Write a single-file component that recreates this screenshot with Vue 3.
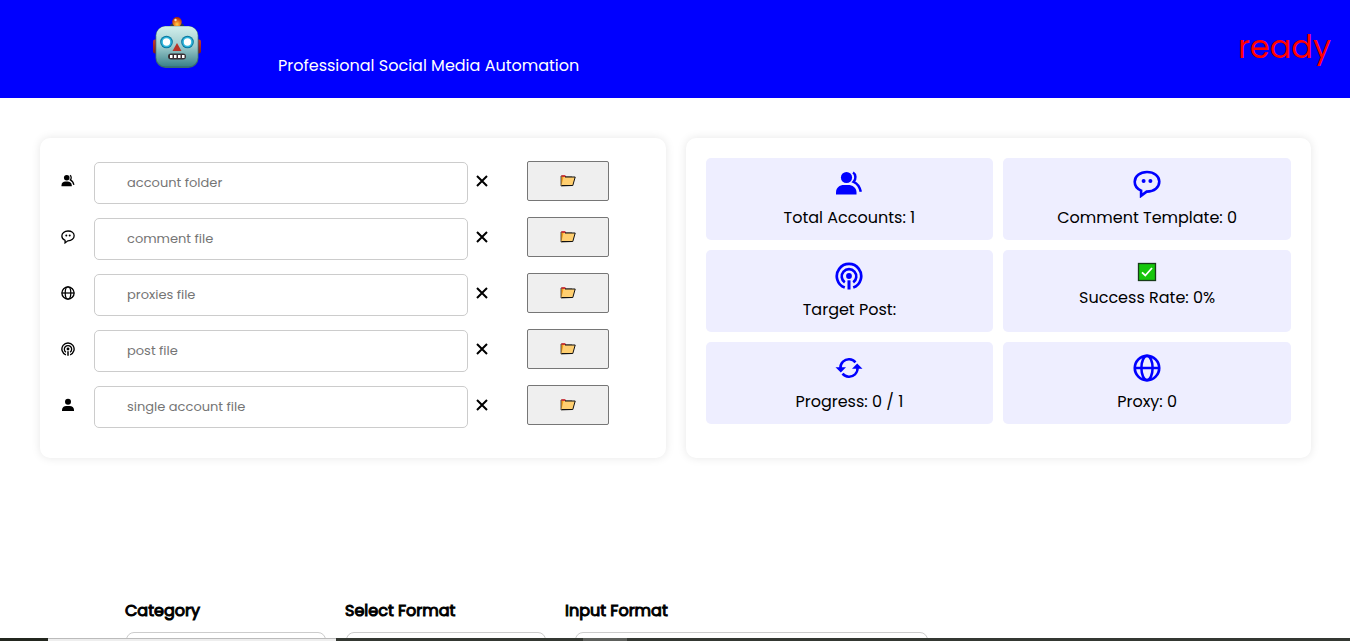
<script setup>
import { ref, h } from 'vue'

const shapes = {
  users: [
    ['circle', { cx: 11.500, cy: 7.500, r: 5.600 }],
    ['path', { d: 'M1 24.500v-2C1 17.500 4.500 15 9 15h4c4.500 0 8.500 2.500 8.500 7.500v2z' }],
    ['path', { d: 'M18 2.500c3 1.800 3.200 6.800.6 9.300c3.600 1.500 6 4.500 7.200 10', fill: 'none', stroke: 'currentColor', 'stroke-width': 2.500 }],
  ],
  comment: [
    ['path', { d: 'M14 2C7 2 1.700 6.200 1.700 11.800c0 4 2.600 7.200 6.400 8.800v5.200l5.500-4.200C21.400 21.700 26.300 17.200 26.300 11.600 26.300 6 21 2 14 2z', fill: 'none', stroke: 'currentColor', 'stroke-width': 2.600 }],
    ['circle', { cx: 10.600, cy: 11, r: 2 }],
    ['circle', { cx: 17.400, cy: 11, r: 2 }],
  ],
  globe: [
    ['circle', { cx: 14, cy: 14, r: 12.200, fill: 'none', stroke: 'currentColor', 'stroke-width': 2.700 }],
    ['ellipse', { cx: 14, cy: 14, rx: 5.600, ry: 12.200, fill: 'none', stroke: 'currentColor', 'stroke-width': 2.500 }],
    ['path', { d: 'M1.600 14h24.800', stroke: 'currentColor', 'stroke-width': 2.500 }],
  ],
  podcast: [
    ['path', { d: 'M9.800 25.600a12.200 12.200 0 1 1 8.400 0', fill: 'none', stroke: 'currentColor', 'stroke-width': 2.700 }],
    ['path', { d: 'M9.800 20.400a7.300 7.300 0 1 1 8.400 0', fill: 'none', stroke: 'currentColor', 'stroke-width': 2.600 }],
    ['circle', { cx: 14, cy: 14, r: 2.900 }],
    ['path', { d: 'M12.500 18.300h3v9.200h-3z' }],
  ],
  user: [
    ['circle', { cx: 14, cy: 7.500, r: 6 }],
    ['path', { d: 'M2 26v-2c0-5 4-8 8.500-8h7c4.500 0 8.500 3 8.500 8v2z' }],
  ],
  refresh: [
    ['path', { d: 'M8 7.700A8.600 8.600 0 0 1 20.500 8.400M20 20.300A8.600 8.600 0 0 1 7.500 19.600M5.500 15a8.600 8.600 0 0 1 2.500-7.300M22.500 13a8.600 8.600 0 0 1-2.500 7.300', fill: 'none', stroke: 'currentColor', 'stroke-width': 2.500 }],
    ['path', { d: 'M.5 13.200h10.500L5.800 18.400zM17 14.800h10.500L22.200 9.600z' }],
  ],
}

const Icon = (props) =>
  h('svg', { viewBox: '0 0 28 28', fill: 'currentColor', 'aria-hidden': 'true' },
    shapes[props.name].map(([tag, attrs]) => h(tag, attrs)))
Icon.props = ['name']

const files = ref([
  { id: 'accounts', icon: 'users', label: 'account folder', value: '' },
  { id: 'comments', icon: 'comment', label: 'comment file', value: '' },
  { id: 'proxies', icon: 'globe', label: 'proxies file', value: '' },
  { id: 'posts', icon: 'podcast', label: 'post file', value: '' },
  { id: 'single', icon: 'user', label: 'single account file', value: '' },
])

const stats = [
  { icon: 'users', text: 'Total Accounts: 1' },
  { icon: 'comment', text: 'Comment Template: 0' },
  { icon: 'podcast', text: 'Target Post:' },
  { icon: 'check', text: 'Success Rate: 0%' },
  { icon: 'refresh', text: 'Progress: 0 / 1' },
  { icon: 'globe', text: 'Proxy: 0' },
]
</script>

<template>
  <div class="page">
    <header class="header">
      <svg class="robot" viewBox="0 0 48 52" aria-hidden="true">
        <defs>
          <linearGradient id="face" x1="0" y1="0" x2="0" y2="1">
            <stop offset="0" stop-color="#d2efec" />
            <stop offset=".5" stop-color="#9fcccd" />
            <stop offset="1" stop-color="#3b828a" />
          </linearGradient>
          <linearGradient id="ear" x1="0" y1="0" x2="0" y2="1">
            <stop offset="0" stop-color="#c9382c" />
            <stop offset="1" stop-color="#7b1a20" />
          </linearGradient>
          <radialGradient id="bulb" cx=".5" cy=".75" r=".7">
            <stop offset="0" stop-color="#ffd34a" />
            <stop offset=".5" stop-color="#e8701c" />
            <stop offset="1" stop-color="#a02a10" />
          </radialGradient>
        </defs>
        <rect x="0" y="22.500" width="5" height="14" rx="2" fill="url(#ear)" />
        <rect x="43" y="22.500" width="5" height="14" rx="2" fill="url(#ear)" />
        <ellipse cx="24" cy="8.800" rx="7" ry="3.200" fill="#293c50" />
        <circle cx="24" cy="4.800" r="4.800" fill="url(#bulb)" />
        <circle cx="22.500" cy="3" r="1.200" fill="#ffe3ba" />
        <rect x="2.500" y="9" width="43" height="42" rx="10" fill="#396b73" />
        <rect x="3.300" y="9.300" width="41.400" height="40" rx="9" fill="url(#face)" />
        <circle cx="13.500" cy="25" r="6.300" fill="#08779f" />
        <circle cx="13.500" cy="25" r="5.300" fill="#31b7dc" />
        <circle cx="13.500" cy="25" r="3.700" fill="#fff" />
        <circle cx="34.500" cy="25" r="6.300" fill="#08779f" />
        <circle cx="34.500" cy="25" r="5.300" fill="#31b7dc" />
        <circle cx="34.500" cy="25" r="3.700" fill="#fff" />
        <path d="M24 26l4.500 8h-9z" fill="#b83327" />
        <rect x="15" y="36.500" width="18" height="6" rx="3" fill="#382f34" />
        <path d="M17 38h2.500v3H17zM21 38h2.500v3H21zM25 38h2.500v3H25zM29 38h2.500v3H29z" fill="#fff" />
      </svg>
      <p class="tagline">Professional Social Media Automation</p>
      <p class="status">ready</p>
    </header>

    <main>
      <div class="panels">
        <form class="card files" @submit.prevent>
          <div v-for="file in files" :key="file.id" class="file-row">
            <label :for="file.id" :aria-label="file.label"><Icon :name="file.icon" class="small-icon" /></label>
            <input :id="file.id" v-model="file.value" type="text" :placeholder="file.label" />
            <button type="button" class="clear" :aria-label="'Clear ' + file.label" @click="file.value = ''">
              <svg viewBox="0 0 12 12" aria-hidden="true"><path d="M1 1l10 10M11 1L1 11" /></svg>
            </button>
            <button type="button" class="browse" :aria-label="'Browse ' + file.label">
              <svg viewBox="0 0 16 12" aria-hidden="true">
                <path d="M1 11V1h4l1 1h6V10.500z" fill="#f29b16" stroke="#55504b" />
                <path d="M1.500 1h4" stroke="#d9232e" stroke-width="1.500" />
                <path d="M3.500 2h11.700L12.800 10.500H1.500z" fill="#ffcf70" />
                <path d="M5 2h10.200L12.800 10.500H1.500" fill="none" stroke="#111" />
              </svg>
            </button>
          </div>
        </form>

        <section class="card stats">
          <div v-for="stat in stats" :key="stat.text" class="stat">
            <svg v-if="stat.icon === 'check'" class="check" viewBox="0 0 20 20" aria-hidden="true">
              <rect x="1.500" y="1.500" width="17" height="17" fill="#16c60c" stroke="#173b18" stroke-width="1.300" />
              <path d="M5 10.300l3.300 3.200 6.700-7.500" fill="none" stroke="#fff" stroke-width="1.800" />
            </svg>
            <Icon v-else :name="stat.icon" class="large-icon" />
            <p>{{ stat.text }}</p>
          </div>
        </section>
      </div>

      <form class="formats" @submit.prevent>
        <div class="field">
          <label for="category">Category</label>
          <select id="category"></select>
        </div>
        <div class="field">
          <label for="format">Select Format</label>
          <select id="format"></select>
        </div>
        <div class="field wide">
          <label for="input-format">Input Format</label>
          <input id="input-format" type="text" />
        </div>
      </form>
    </main>

    <div class="edge" aria-hidden="true">
      <span class="edge-start"></span>
      <span class="edge-light"></span>
      <span class="edge-middle"></span>
      <span class="edge-thumb"></span>
    </div>
  </div>
</template>

<style>
body {
  margin: 0;
  background: #fff;
}
</style>

<style scoped>
* {
  box-sizing: border-box;
}
.page {
  height: 100vh;
  overflow: hidden;
  color: #000;
  font-family: Poppins, Inter, "Open Sans", sans-serif;
  font-size: 16px;
  line-height: 24px;
}
p {
  margin: 0;
}
svg {
  display: block;
}
.header {
  display: flex;
  align-items: flex-start;
  height: 98px;
  padding: 17px 19px 0 153px;
  background: #00f;
  color: #fff;
}
.robot {
  flex: none;
  width: 48px;
  height: 52px;
}
.tagline {
  margin: 37px 0 0 77px;
}
.status {
  margin: 6px 0 0 auto;
  color: #f00;
  font-size: 32px;
  line-height: 48px;
}
.panels {
  display: grid;
  grid-template-columns: 1fr 1fr;
  gap: 20px;
  padding: 40px 39px 0 40px;
}
.card {
  min-height: 320px;
  border-radius: 10px;
  background: #fff;
  box-shadow: 0 0 10px rgba(0, 0, 0, 0.1);
}
.files {
  display: flex;
  flex-direction: column;
  gap: 14px;
  padding: 23px 57px 20px 21px;
}
.file-row {
  display: grid;
  grid-template-columns: 33px minmax(0, 1fr) 59px 82px;
  height: 42px;
}
.small-icon {
  width: 14px;
  height: 14px;
  margin-top: 13px;
}
input,
select {
  width: 100%;
  height: 42px;
  border: 1px solid #ccc;
  border-radius: 5px;
  background: #fff;
  font: inherit;
}
.file-row input {
  margin-top: 1px;
  padding: 0 32px;
  font-size: 13px;
}
input::placeholder {
  color: #757575;
  opacity: 1;
}
.clear {
  display: grid;
  place-items: center;
  width: 29px;
  height: 40px;
  padding: 0;
  border: 0;
  background: none;
}
.clear svg {
  width: 12px;
  height: 12px;
  fill: none;
  stroke: #000;
  stroke-width: 2;
}
.browse {
  display: grid;
  place-items: center;
  height: 40px;
  padding: 0;
  border: 1px solid #767676;
  border-radius: 2px;
  background: #efefef;
}
.browse svg {
  width: 16px;
  height: 12px;
}
.stats {
  display: grid;
  grid-template-columns: 1fr 1fr;
  grid-auto-rows: 82px;
  gap: 10px;
  padding: 20px;
}
.stat {
  display: flex;
  flex-direction: column;
  align-items: center;
  gap: 8px;
  padding-top: 12px;
  border-radius: 5px;
  background: #eef;
}
.large-icon {
  width: 28px;
  height: 28px;
  color: #00f;
}
.check {
  width: 20px;
  height: 20px;
  margin-bottom: -4px;
}
.formats {
  display: flex;
  gap: 20px;
  padding: 141px 40px 0 125px;
}
.field {
  display: grid;
  gap: 9px;
  width: 200px;
}
.field label {
  font-weight: 400;
  -webkit-text-stroke: 1px #000;
}
.field select,
.field input {
  appearance: none;
  margin-left: 1px;
  border-radius: 8px;
}
.wide {
  width: 363px;
}
.wide input {
  width: 353px;
  margin-left: 10px;
}
.edge {
  position: fixed;
  inset: auto 0 0;
  display: flex;
  height: 3px;
  background: #343832;
}
.edge-start {
  width: 48px;
  background: #23271f;
}
.edge-light {
  width: 288px;
  border-top: 1px solid #bbb;
  background: #eee;
}
.edge-middle {
  width: 247px;
}
.edge-thumb {
  width: 44px;
  background: #5d605c;
}
</style>
